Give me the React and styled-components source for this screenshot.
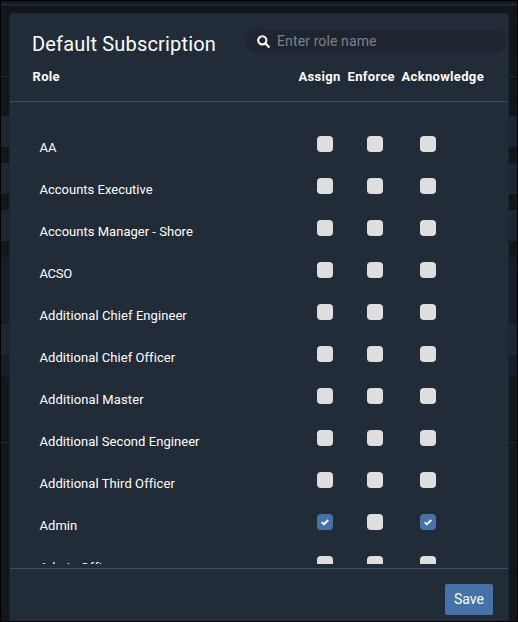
import React, { useState } from "react";
import styled, { createGlobalStyle } from "styled-components";

const GlobalStyle = createGlobalStyle`
  *, *::before, *::after { box-sizing: border-box; }
  body {
    margin: 0;
    background: #000;
    color: #fff;
    font-family: Roboto, "Liberation Sans", sans-serif;
    font-size: 13px;
  }
`;

const Screen = styled.main`
  position: relative;
  width: 518px;
  height: 622px;
  border: 1px solid #000;
  overflow: hidden;
`;

const Backdrop = styled.div`
  display: flex;
  flex-direction: column;
  height: 100%;
  background: #11161b;
`;

const Band = styled.div`
  flex: none;
  height: ${(p) => p.$height}px;
  background: ${(p) => p.$fill};
`;

const Dialog = styled.section`
  position: absolute;
  top: 12px;
  left: 8px;
  width: 500px;
  height: 608px;
  display: flex;
  flex-direction: column;
  background: #222b38;
  border: 1px solid #1d2630;
  border-bottom: 0;
  border-radius: 4px 4px 0 0;
`;

const Header = styled.header`
  flex: none;
  height: 88px;
  padding-top: 15px;
  border-bottom: 1px solid #3b4d67;
`;

const TitleRow = styled.div`
  display: flex;
  justify-content: space-between;
  height: 25px;
  padding: 0 2px 0 22px;
`;

const Title = styled.h1`
  margin: 3px 0 0;
  font-size: 20px;
  line-height: 25px;
  font-weight: 400;
  letter-spacing: 0.17px;
  white-space: nowrap;
`;

const SearchBox = styled.label`
  display: flex;
  align-items: center;
  gap: 7px;
  width: 260px;
  height: 24px;
  padding-left: 11px;
  border-radius: 12px;
  background: #1e2530;
`;

const SearchInput = styled.input`
  flex: 1;
  min-width: 0;
  height: 24px;
  padding: 0 0 1px;
  border: 0;
  outline: 0;
  background: transparent;
  color: #fff;
  font: 400 14px Roboto, "Liberation Sans", sans-serif;
  letter-spacing: 0.12px;
  &::placeholder { color: #7c828a; opacity: 1; }
`;

const ColumnHeads = styled.div`
  display: grid;
  grid-template-columns: 266px 49px 54px 1fr;
  padding: 13px 0 0 22.5px;
  line-height: 20px;
`;

const ColumnHead = styled.span`
  font-weight: 700;
  letter-spacing: 0.33px;
  white-space: nowrap;
`;

const RoleList = styled.div`
  flex: none;
  height: 462px;
  padding-top: 24px;
  overflow: hidden;
`;

const RoleRow = styled.div`
  display: grid;
  grid-template-columns: 277.5px 50px 53px 1fr;
  height: 42px;
  padding: 10px 0 0 29.5px;
`;

const RoleName = styled.span`
  padding-top: 2px;
  line-height: 19px;
  letter-spacing: ${(p) => p.$tracking ?? 0.05}px;
  white-space: nowrap;
`;

const Check = styled.button`
  display: grid;
  place-items: center;
  width: 16px;
  height: 16px;
  padding: 0;
  border: 0;
  border-radius: 4px;
  background: ${(p) => (p.$on ? "#4573a9" : "#dedede")};
`;

const Footer = styled.footer`
  flex: 1;
  display: flex;
  justify-content: flex-end;
  align-items: flex-start;
  margin-top: 4px;
  padding: 15px 15px 0 0;
  border-top: 1px solid #3b4d67;
`;

const SaveButton = styled.button`
  width: 48px;
  height: 31px;
  padding: 0 0 1px;
  border: 0;
  border-radius: 2px;
  background: #4573a9;
  color: #fff;
  font: 400 14px Roboto, "Liberation Sans", sans-serif;
`;

const BANDS = [
  [1, "#11151d"], [1, "#151921"], [1, "#191d26"], [2, "#20242e"],
  [70, "#11161b"], [1, "#202833"], [39, "#11161b"],
  [31, "#1c2731"], [16, "#11161b"], [31, "#1c2731"], [16, "#11161b"],
  [31, "#1c2731"], [16, "#11161b"], [67, "#171d28"], [31, "#1c2731"],
  [21, "#171d28"], [66, "#11161b"], [1, "#202833"],
];

const COLUMNS = ["Assign", "Enforce", "Acknowledge"];

const ROLES = [
  { name: "AA" },
  { name: "Accounts Executive", tracking: 0 },
  { name: "Accounts Manager - Shore", tracking: 0.02 },
  { name: "ACSO", tracking: -0.3 },
  { name: "Additional Chief Engineer", tracking: 0.07 },
  { name: "Additional Chief Officer" },
  { name: "Additional Master", tracking: 0.1 },
  { name: "Additional Second Engineer" },
  { name: "Additional Third Officer", tracking: 0.07 },
  { name: "Admin", checked: ["Assign", "Acknowledge"] },
  { name: "Admin Officer" },
];

const SearchIcon = () => (
  <svg width="13" height="13" viewBox="0 0 13 13" fill="none" stroke="#fff">
    <circle cx="5.3" cy="5.3" r="4.1" strokeWidth="2.1" />
    <path d="M8.4 8.4 11.7 11.7" strokeWidth="2.3" strokeLinecap="round" />
  </svg>
);

const CheckIcon = () => (
  <svg width="8" height="7" viewBox="0 0 8 7" fill="none" stroke="#fff" strokeWidth="1.9">
    <path d="M.7 3.3 2.8 5.3 7.3 1" />
  </svg>
);

export default function App() {
  const [selected, setSelected] = useState(() =>
    new Set(ROLES.flatMap((r) => (r.checked ?? []).map((c) => `${r.name}/${c}`)))
  );
  const toggle = (key) =>
    setSelected((prev) => {
      const next = new Set(prev);
      if (!next.delete(key)) next.add(key);
      return next;
    });

  return (
    <Screen>
      <GlobalStyle />
      <Backdrop>
        {BANDS.map(([height, fill], i) => (
          <Band key={i} $height={height} $fill={fill} />
        ))}
      </Backdrop>
      <Dialog>
        <Header>
          <TitleRow>
            <Title>Default Subscription</Title>
            <SearchBox>
              <SearchIcon />
              <SearchInput placeholder="Enter role name" />
            </SearchBox>
          </TitleRow>
          <ColumnHeads>
            <ColumnHead>Role</ColumnHead>
            {COLUMNS.map((c) => <ColumnHead key={c}>{c}</ColumnHead>)}
          </ColumnHeads>
        </Header>
        <RoleList>
          {ROLES.map(({ name, tracking }) => (
            <RoleRow key={name}>
              <RoleName $tracking={tracking}>{name}</RoleName>
              {COLUMNS.map((c) => {
                const key = `${name}/${c}`;
                const on = selected.has(key);
                return (
                  <Check key={c} $on={on} role="checkbox" aria-checked={on} onClick={() => toggle(key)}>
                    {on && <CheckIcon />}
                  </Check>
                );
              })}
            </RoleRow>
          ))}
        </RoleList>
        <Footer>
          <SaveButton>Save</SaveButton>
        </Footer>
      </Dialog>
    </Screen>
  );
}
